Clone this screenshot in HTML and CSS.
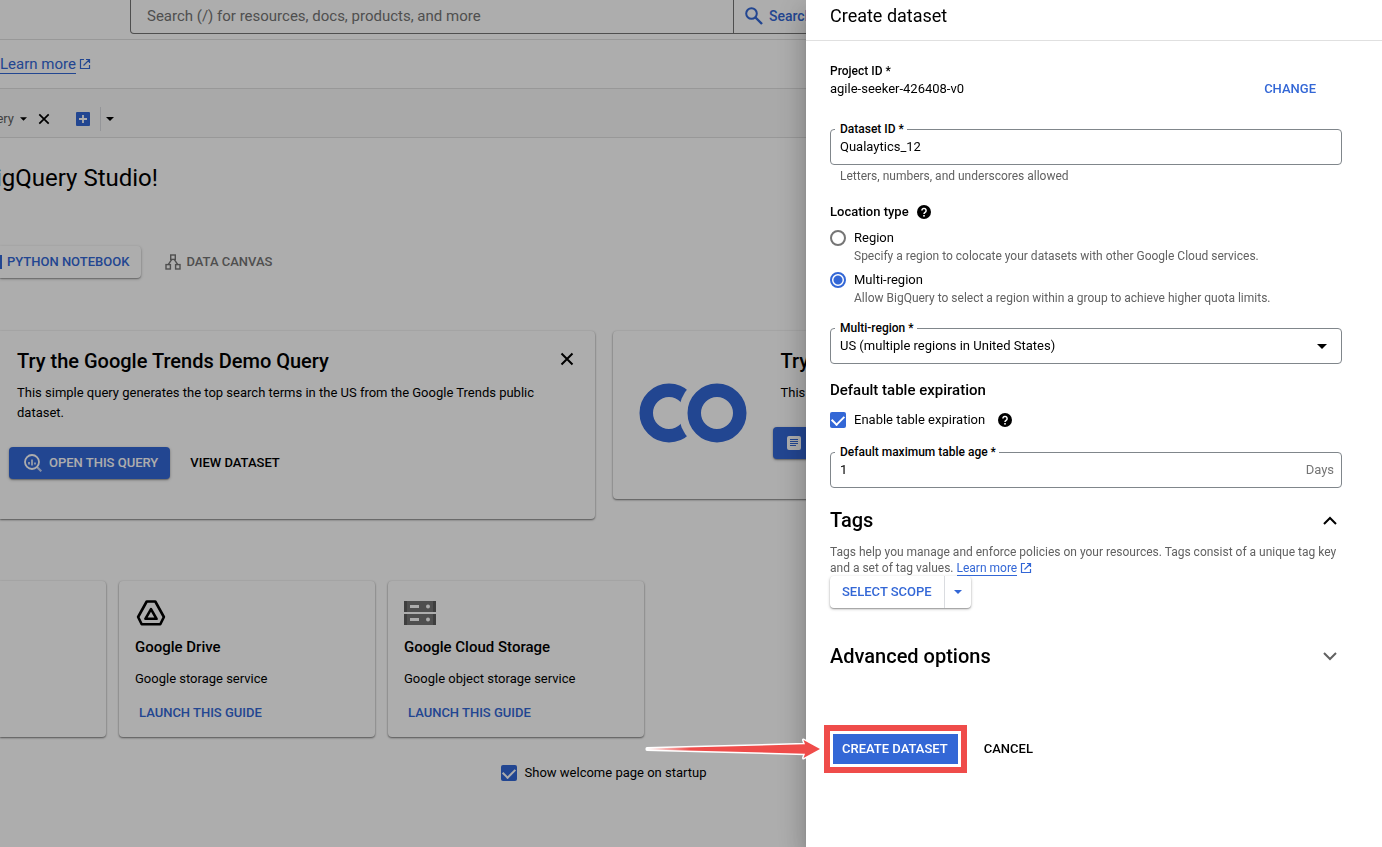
FILE: index.html
```html
<!DOCTYPE html>
<html lang="en">
<head>
<meta charset="utf-8">
<title>BigQuery Studio – Create dataset</title>
<link rel="stylesheet" href="styles.css">
</head>
<body>
<svg class="sprite" aria-hidden="true">
  <symbol id="caret" viewBox="0 0 10 5"><path d="M0 0h10L5 5z"/></symbol>
  <symbol id="close" viewBox="0 0 14 14"><path d="M1.500 1.500l11 11M12.500 1.500l-11 11" fill="none" stroke="currentColor" stroke-width="2"/></symbol>
  <symbol id="external" viewBox="0 0 12 12"><path d="M5 1.500H1.500v9h9V7M7 1.500h3.500V5M10.500 1.500L4.500 7.500" fill="none" stroke="currentColor" stroke-width="1.200"/></symbol>
  <symbol id="help" viewBox="0 0 14 14"><circle cx="7" cy="7" r="7"/><path d="M4.900 5.500a2.100 2.100 0 1 1 3.200 1.800c-.7.500-1.100.8-1.100 1.700" fill="none" stroke="#fff" stroke-width="1.500"/><rect x="6.200" y="10" width="1.600" height="1.600" fill="#fff"/></symbol>
</svg>

<header class="topbar">
  <div class="search">
    <input class="search-input" type="text" aria-label="Search" placeholder="Search (/) for resources, docs, products, and more">
    <button class="search-button" type="button">
      <svg width="18" height="18" viewBox="0 0 18 18"><circle cx="6.500" cy="6.500" r="5.300" fill="none" stroke="currentColor" stroke-width="2"/><path d="M10.500 10.500l6.500 6.500" stroke="currentColor" stroke-width="2.400"/></svg>
      Search
    </button>
  </div>
</header>
<div class="banner">
  <a class="link" href="#">Learn more</a>
  <svg class="blue" width="12" height="12"><use href="#external"/></svg>
</div>
<nav class="tabs">
  <span class="tab-name">ery</span>
  <button class="icon-button tab-menu" type="button" aria-label="Tab menu"><svg width="7" height="4"><use href="#caret"/></svg></button>
  <button class="icon-button" type="button" aria-label="Close tab"><svg width="12" height="12"><use href="#close"/></svg></button>
  <button class="icon-button tab-add" type="button" aria-label="New tab"><svg width="14" height="14" viewBox="0 0 14 14"><rect width="14" height="14" rx="1" fill="#3367d6"/><path d="M7 3v8M3 7h8" stroke="#fff" stroke-width="1.800"/></svg></button>
  <button class="icon-button tab-more" type="button" aria-label="More tab types"><svg width="8" height="4"><use href="#caret"/></svg></button>
</nav>

<main class="main">
  <h1 class="title">igQuery Studio!</h1>
  <div class="create-row">
    <button class="button raised notebook" type="button"><span class="notebook-edge"></span>PYTHON NOTEBOOK</button>
    <button class="button canvas" type="button">
      <svg class="line" width="16" height="16" viewBox="0 0 16 16" stroke-width="1.400"><rect x="5.700" y="1" width="4.600" height="4.400"/><rect x="1" y="10.600" width="4.400" height="4.400"/><rect x="10.600" y="10.600" width="4.400" height="4.400"/><path d="M6.800 5.400L3.200 10.600M9.200 5.400l3.600 5.200"/></svg>
      DATA CANVAS
    </button>
  </div>

  <div class="demos">
    <section class="card demo demo-trends">
      <div class="demo-body">
        <h2 class="demo-title">Try the Google Trends Demo Query</h2>
        <p class="demo-text">This simple query generates the top search terms in the US from the Google Trends public dataset.</p>
        <div class="demo-actions">
          <button class="button primary" type="button">
            <svg class="line" width="18" height="18" viewBox="0 0 18 18"><circle cx="8" cy="8" r="7" stroke-width="1.800"/><path d="M5 8v2.500M8 5.500v6M11 8.500v2" stroke-width="1.500"/><path d="M13 13l4.300 4.300" stroke-width="2.200" opacity=".7"/></svg>
            OPEN THIS QUERY
          </button>
          <button class="button plain" type="button">VIEW DATASET</button>
        </div>
      </div>
      <button class="icon-button demo-close" type="button" aria-label="Dismiss"><svg width="14" height="14"><use href="#close"/></svg></button>
    </section>
    <section class="card demo demo-notebook">
      <svg class="line blue" width="108" height="60" viewBox="0 0 108 60" stroke-width="13.500">
        <mask id="gap" maskUnits="userSpaceOnUse" x="0" y="0" width="108" height="60"><rect width="108" height="60" fill="#fff" stroke="none"/><circle cx="77.500" cy="30" r="37.700" fill="#000" stroke="none"/></mask>
        <circle cx="78" cy="30" r="22.750"/><circle cx="30" cy="30" r="22.750" mask="url(#gap)"/>
      </svg>
      <div class="demo-body">
        <h2 class="demo-title">Try</h2>
        <p class="demo-text">This</p>
        <div class="demo-actions">
          <button class="button primary open-notebook" type="button" aria-label="Open notebook">
            <svg width="14" height="14" viewBox="0 0 14 14"><rect width="14" height="14" rx="2" fill="#fff"/><path d="M3 3.500h8M3 5.500h8M3 7.500h8M3 9.500h6" stroke="#3367d6" stroke-width="1"/></svg>
          </button>
        </div>
      </div>
    </section>
  </div>

  <div class="guides">
    <section class="card guide guide-cut"></section>
    <section class="card guide">
      <svg class="line" width="32" height="32" viewBox="0 0 32 32" stroke-width="2.600" stroke-linejoin="round"><path d="M11.700 4.500h8.600l8.600 15.500-3.600 7.300H6.700L3.100 20z"/><path d="M16 12.200l5.600 9.600H10.400z"/></svg>
      <h3 class="guide-title">Google Drive</h3>
      <p class="guide-text">Google storage service</p>
      <a class="guide-link" href="#">LAUNCH THIS GUIDE</a>
    </section>
    <section class="card guide">
      <svg width="32" height="32" viewBox="0 0 32 32"><path d="M0 4h32v11H0zM0 17h32v11H0z" fill="#757575"/><path d="M0 4h3v11H0zM29 4h3v11h-3zM0 17h3v11H0zM29 17h3v11h-3z" fill="#5c5c5c"/><path d="M6 8h9v3H6zM6 21h9v3H6z" fill="#fff"/><circle cx="24" cy="9.500" r="2" fill="#fff"/><circle cx="24" cy="22.500" r="2" fill="#fff"/></svg>
      <h3 class="guide-title">Google Cloud Storage</h3>
      <p class="guide-text">Google object storage service</p>
      <a class="guide-link" href="#">LAUNCH THIS GUIDE</a>
    </section>
  </div>
  <label class="startup"><input class="checkbox" type="checkbox" checked>Show welcome page on startup</label>
</main>

<div class="scrim"></div>

<aside class="drawer">
  <h2 class="drawer-title">Create dataset</h2>
  <form class="form">
    <div class="project">
      <div>
        <div class="project-label">Project ID *</div>
        <div class="project-value">agile-seeker-426408-v0</div>
      </div>
      <button class="text-button change" type="button">CHANGE</button>
    </div>

    <div class="field field-dataset">
      <label class="field-label" for="dataset">Dataset ID *</label>
      <input class="field-control" id="dataset" type="text" value="Qualaytics_12">
    </div>
    <p class="hint field-hint">Letters, numbers, and underscores allowed</p>

    <div class="group-label">Location type <svg width="14" height="14"><use href="#help"/></svg></div>
    <div class="option">
      <input class="radio" type="radio" name="location" id="region">
      <div><label class="option-label" for="region">Region</label>
      <p class="hint">Specify a region to colocate your datasets with other Google Cloud services.</p></div>
    </div>
    <div class="option">
      <input class="radio" type="radio" name="location" id="multi" checked>
      <div><label class="option-label" for="multi">Multi-region</label>
      <p class="hint">Allow BigQuery to select a region within a group to achieve higher quota limits.</p></div>
    </div>

    <div class="field field-lower">
      <label class="field-label" for="where">Multi-region *</label>
      <select class="field-control" id="where"><option>US (multiple regions in United States)</option></select>
      <svg class="select-caret" width="10" height="5"><use href="#caret"/></svg>
    </div>

    <h3 class="subhead">Default table expiration</h3>
    <div class="enable">
      <label class="enable-label"><input class="checkbox" type="checkbox" checked>Enable table expiration</label>
      <svg width="14" height="14"><use href="#help"/></svg>
    </div>
    <div class="field field-lower">
      <label class="field-label" for="age">Default maximum table age *</label>
      <input class="field-control" id="age" type="text" value="1">
      <span class="suffix">Days</span>
    </div>

    <div class="section-head section-tags">
      <h3 class="section-title">Tags</h3>
      <button class="icon-button" type="button" aria-label="Collapse tags"><svg class="line" width="14" height="9" viewBox="0 0 14 9" stroke-width="2"><path d="M1 8l6-6 6 6"/></svg></button>
    </div>
    <p class="hint tags-text">Tags help you manage and enforce policies on your resources. Tags consist of a unique tag key and a set of tag values. <a class="link" href="#">Learn more</a> <svg class="blue inline-icon" width="12" height="12"><use href="#external"/></svg></p>
    <div class="split">
      <button class="text-button split-main" type="button">SELECT SCOPE</button>
      <button class="text-button split-more" type="button" aria-label="Scope options"><svg width="8" height="4"><use href="#caret"/></svg></button>
    </div>

    <div class="section-head section-advanced">
      <h3 class="section-title">Advanced options</h3>
      <button class="icon-button expand" type="button" aria-label="Expand advanced options"><svg class="line" width="14" height="9" viewBox="0 0 14 9" stroke-width="2"><path d="M1 1l6 6 6-6"/></svg></button>
    </div>

    <div class="actions">
      <svg class="arrow" width="178" height="24" viewBox="0 0 178 24">
        <defs><linearGradient id="fade" x1="0" x2="1"><stop offset="0" stop-color="#fff"/><stop offset=".25" stop-color="#ef4c4a"/></linearGradient></defs>
        <path d="M2 11.500L160 7.300 158.500 3 175 12l-16.500 9L160 16.700 2 12.500z" fill="url(#fade)" stroke="#fff" stroke-width="3" stroke-linejoin="round" paint-order="stroke"/>
      </svg>
      <button class="create" type="submit">CREATE DATASET</button>
      <button class="button plain cancel" type="button">CANCEL</button>
    </div>
  </form>
</aside>
</body>
</html>
```
FILE: styles.css
```css
* { box-sizing: border-box; }
body {
  margin: 0;
  min-height: 100vh;
  overflow: hidden;
  background: #fff;
  color: #000;
  font: 13px/20px Roboto, "Liberation Sans", sans-serif;
}
h1, h2, h3, p { margin: 0; font-weight: 500; }
p { font-weight: 400; }
button, input, select { font: inherit; color: inherit; }
button { padding: 0; border: 0; background: none; }
svg { display: block; flex: none; fill: currentColor; }
.line { fill: none; stroke: currentColor; }
.sprite { position: absolute; width: 0; height: 0; }
.blue { color: #3367d6; }
.link { color: #3367d6; text-decoration: none; border-bottom: 1px solid; }
.icon-button { display: flex; align-items: center; justify-content: center; }

/* Top of the console */
.topbar { height: 40px; padding: 0 175px 0 130px; border-bottom: 1px solid #e0e0e0; }
.search {
  display: flex;
  height: 34px;
  border: 1px solid #757575;
  border-top: 0;
  border-radius: 0 0 4px 4px;
}
.search-input {
  width: 603px;
  padding: 0 16px 2px;
  border: 0;
  border-right: 1px solid #757575;
  background: none;
  font-size: 15px;
}
.search-input::placeholder { color: #757575; opacity: 1; }
.search-button { display: flex; align-items: center; gap: 6px; padding: 0 0 2px 11px; color: #3367d6; font-size: 14px; font-weight: 500; }
.banner { display: flex; align-items: center; gap: 3px; height: 49px; border-bottom: 1px solid #e0e0e0; font-size: 15px; line-height: 18px; }
.tabs { display: flex; align-items: center; height: 49px; padding-top: 12px; background: #fafafa; border-bottom: 1px solid #e0e0e0; }
/* The start of the tab name and of the title is scrolled out of view. */
.tab-name, .title { display: flex; justify-content: flex-end; white-space: nowrap; }
.tab-name { width: 14px; margin-right: 6px; color: #616161; }
.tab-menu { margin-right: 11px; }
.tab-add { margin: 0 10px 0 26px; }
.tab-more { height: 24px; padding-left: 5px; border-left: 1px solid #dadce0; }

/* Welcome page */
.main { padding: 24px 175px 0 0; }
.title { width: 158px; font-size: 24px; line-height: 32px; font-weight: 400; }
.create-row { display: flex; gap: 24px; margin-top: 52px; }
.button { display: flex; align-items: center; height: 32px; border-radius: 4px; font-weight: 500; white-space: nowrap; }
.raised, .split, .primary { box-shadow: 0 1px 3px rgba(0, 0, 0, .3), 0 1px 1px rgba(0, 0, 0, .2); }
.notebook { gap: 5px; padding-right: 12px; color: #3367d6; border-radius: 0 4px 4px 0; }
.notebook-edge { width: 2px; height: 14px; background: #3367d6; }
.canvas { gap: 5px; color: #757575; }
.card { border-radius: 4px; background: #fff; box-shadow: 0 1px 2px rgba(0, 0, 0, .5), 0 0 2px rgba(0, 0, 0, .1); }
.demos { display: grid; grid-template-columns: 1fr 1fr; align-items: start; gap: 18px; margin-top: 53px; }
.demo { display: flex; padding-top: 18px; }
.demo-trends { height: 188px; padding-left: 9px; border-radius: 0 4px 4px 0; }
.demo-notebook { height: 168px; gap: 26px; padding-left: 26px; }
.demo-notebook > svg { margin-top: 34px; }
.demo-body { flex: 1; }
.demo-title { padding-left: 8px; font-size: 20px; line-height: 24px; }
.demo-text { padding-left: 8px; margin-top: 10px; max-width: 540px; }
.demo-actions { display: flex; gap: 20px; margin-top: 24px; }
.demo-close { align-self: flex-start; width: 56px; height: 20px; }
.primary { gap: 7px; padding: 0 12px 0 15px; background: #3367d6; color: #fff; }
.open-notebook { width: 160px; padding-left: 14px; }
.guides { display: flex; gap: 13px; margin-top: 62px; }
.guide { width: 256px; height: 156px; padding: 16px; }
.guide-cut { width: 106px; border-radius: 0 4px 4px 0; }
.guide-title { margin-top: 8px; font-size: 15px; }
.guide-text { margin-top: 12px; }
.guide-link { display: block; margin: 14px 4px 0; color: #3367d6; font-weight: 500; text-decoration: none; }
.startup { display: flex; align-items: center; justify-content: center; gap: 8px; margin-top: 26px; }

/* Form controls */
.checkbox, .radio { appearance: none; flex: none; width: 16px; height: 16px; margin: 0; }
.checkbox { display: grid; place-items: center; padding-bottom: 3px; border-radius: 2px; background: #3367d6; }
.checkbox:checked::before {
  content: "";
  width: 6px;
  height: 10px;
  border: solid #fff;
  border-width: 0 2px 2px 0;
  transform: rotate(45deg);
}
.radio { margin-top: 2px; border: 2px solid #757575; border-radius: 50%; }
.radio:checked { border-color: #3367d6; background: radial-gradient(circle, #3367d6 4px, #fff 5px); }

/* Side panel */
.scrim { position: fixed; inset: 0; background: rgba(0, 0, 0, .32); }
.drawer {
  position: fixed;
  inset: 0 0 0 auto;
  width: 576px;
  background: #fff;
  box-shadow: 0 8px 10px -5px rgba(0, 0, 0, .2), 0 16px 24px 2px rgba(0, 0, 0, .14), 0 6px 30px 5px rgba(0, 0, 0, .12);
}
.drawer-title { padding: 4px 24px 12px; border-bottom: 1px solid #e0e0e0; font-size: 18px; line-height: 24px; font-weight: 400; }
.form { padding: 22px 40px 0 24px; }
.project { display: flex; justify-content: space-between; align-items: flex-end; }
.project-label { font-size: 12px; line-height: 16px; font-weight: 500; }
.text-button { color: #3367d6; font-weight: 500; }
.change { padding-right: 26px; }
.field { position: relative; display: flex; align-items: center; height: 36px; border: 1px solid #80868b; border-radius: 4px; }
.field-dataset { margin-top: 30px; }
.field-lower { margin-top: 22px; }
.field-label { position: absolute; top: -9px; left: 4px; padding: 0 3px 0 5px; background: #fff; font-size: 12px; line-height: 16px; font-weight: 500; }
.field-control { appearance: none; flex: 1; min-width: 0; height: 32px; padding: 0 9px; border: 0; background: none; }
input.field-control { padding-bottom: 2px; }
.select-caret { margin-right: 14px; }
.suffix { padding-right: 7px; color: #757575; }
.hint { color: #616161; font-size: 12px; line-height: 16px; }
.field-hint { padding-left: 10px; margin-top: 3px; }
.group-label { display: flex; align-items: center; gap: 8px; margin-top: 18px; font-weight: 500; }
.option { display: flex; gap: 8px; margin-top: 6px; }
.option-label { display: block; }
.subhead { margin-top: 16px; font-size: 15px; }
.enable { display: flex; align-items: center; gap: 13px; margin-top: 10px; }
.enable-label { display: flex; align-items: center; gap: 8px; }
.section-head { display: flex; align-items: center; justify-content: space-between; padding-right: 5px; }
.section-title { font-size: 20px; line-height: 24px; }
.section-tags { margin-top: 20px; }
.expand { color: #616161; }
.tags-text { margin-top: 12px; }
.inline-icon { display: inline-block; vertical-align: -2px; }
.split { display: flex; width: max-content; height: 32px; background: #fff; border-radius: 4px; }
.split-main { padding: 0 12px; }
.split-more { display: flex; align-items: center; justify-content: center; width: 27px; border-left: 1px solid #dadce0; }
.section-advanced { margin-top: 36px; }
.actions { position: relative; display: flex; align-items: center; gap: 26px; margin-top: 66px; padding-left: 3px; }
.create { height: 30px; padding: 0 10px 0 9px; background: #3367d6; color: #fff; font-weight: 500; outline: 6px solid #ef4c4a; outline-offset: 3px; }
.arrow { position: absolute; left: -185px; top: 3px; }
.cancel { height: 30px; }
```
